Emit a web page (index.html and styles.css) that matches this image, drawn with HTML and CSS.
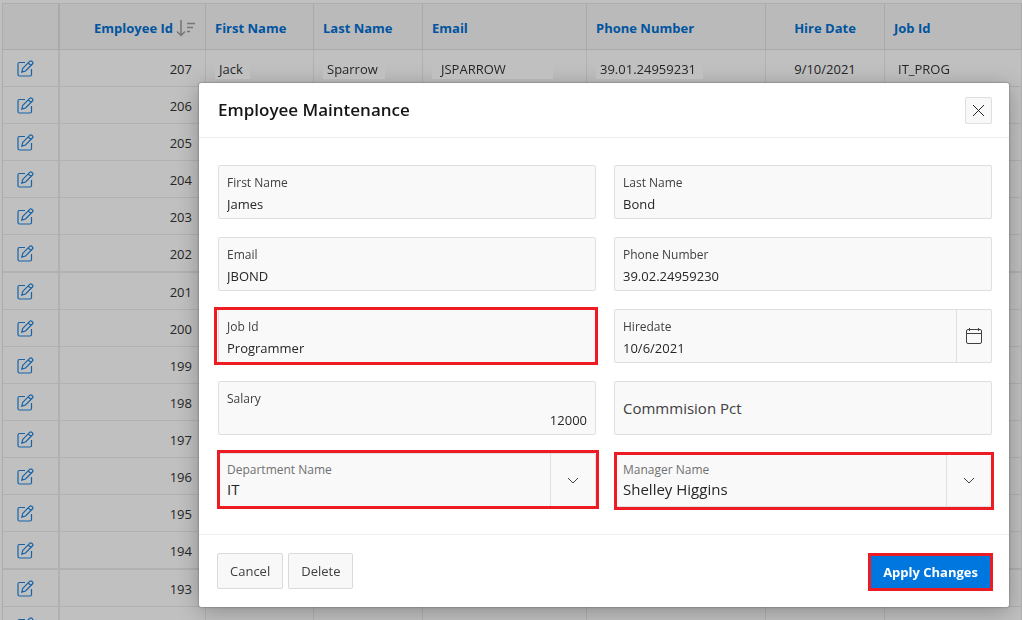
FILE: index.html
```html
<!DOCTYPE html>
<html lang="en">
<head>
<meta charset="utf-8">
<title>Employee Maintenance</title>
<link rel="stylesheet" href="styles.css">
</head>
<body>
<svg class="sprite" aria-hidden="true">
  <symbol id="edit" viewBox="0 0 17 17"><path d="M8 2.500H2.500A1.500 1.500 0 0 0 1 4v10.500A1.500 1.500 0 0 0 2.500 16h10.500a1.500 1.500 0 0 0 1.500-1.500V9M5.800 8.300l6.900-7a1.500 1.500 0 0 1 2.100 0l.600.600a1.500 1.500 0 0 1 0 2.100L8.500 11 4.800 12.100zM11.200 2.800l2.700 2.700"/></symbol>
</svg>
<main class="report">
  <table class="grid">
    <colgroup><col class="c-edit"><col class="c-id"><col class="c-first"><col class="c-last"><col class="c-email"><col class="c-phone"><col class="c-hire"><col></colgroup>
    <thead>
      <tr>
        <th></th>
        <th class="num sorted"><span class="sort-head"><a href="#">Employee Id</a><svg class="sort" viewBox="0 0 20 18"><path d="M5 1v15.500M1 12.500l4 4 4-4M11 4.500h8M11 8.500h6M11 12.500h3"/></svg></span></th>
        <th><a href="#">First Name</a></th>
        <th><a href="#">Last Name</a></th>
        <th><a href="#">Email</a></th>
        <th><a href="#">Phone Number</a></th>
        <th class="mid"><a href="#">Hire Date</a></th>
        <th><a href="#">Job Id</a></th>
      </tr>
    </thead>
    <tbody>
      <tr><td><a class="edit" href="#" aria-label="Edit 207"><svg><use href="#edit"/></svg></a></td><td class="num">207</td><td><span class="value">Jack</span></td><td><span class="value">Sparrow</span></td><td><span class="value wide">JSPARROW</span></td><td><span class="value">39.01.24959231</span></td><td class="mid">9/10/2021</td><td><span class="value plain">IT_PROG</span></td></tr>
      <tr><td><a class="edit" href="#" aria-label="Edit 206"><svg><use href="#edit"/></svg></a></td><td class="num">206</td><td></td><td></td><td></td><td></td><td></td><td></td></tr>
      <tr><td><a class="edit" href="#" aria-label="Edit 205"><svg><use href="#edit"/></svg></a></td><td class="num">205</td><td></td><td></td><td></td><td></td><td></td><td></td></tr>
      <tr><td><a class="edit" href="#" aria-label="Edit 204"><svg><use href="#edit"/></svg></a></td><td class="num">204</td><td></td><td></td><td></td><td></td><td></td><td></td></tr>
      <tr><td><a class="edit" href="#" aria-label="Edit 203"><svg><use href="#edit"/></svg></a></td><td class="num">203</td><td></td><td></td><td></td><td></td><td></td><td></td></tr>
      <tr class="thick"><td><a class="edit" href="#" aria-label="Edit 202"><svg><use href="#edit"/></svg></a></td><td class="num">202</td><td></td><td></td><td></td><td></td><td></td><td></td></tr>
      <tr><td><a class="edit" href="#" aria-label="Edit 201"><svg><use href="#edit"/></svg></a></td><td class="num">201</td><td></td><td></td><td></td><td></td><td></td><td></td></tr>
      <tr><td><a class="edit" href="#" aria-label="Edit 200"><svg><use href="#edit"/></svg></a></td><td class="num">200</td><td></td><td></td><td></td><td></td><td></td><td></td></tr>
      <tr><td><a class="edit" href="#" aria-label="Edit 199"><svg><use href="#edit"/></svg></a></td><td class="num">199</td><td></td><td></td><td></td><td></td><td></td><td></td></tr>
      <tr><td><a class="edit" href="#" aria-label="Edit 198"><svg><use href="#edit"/></svg></a></td><td class="num">198</td><td></td><td></td><td></td><td></td><td></td><td></td></tr>
      <tr><td><a class="edit" href="#" aria-label="Edit 197"><svg><use href="#edit"/></svg></a></td><td class="num">197</td><td></td><td></td><td></td><td></td><td></td><td></td></tr>
      <tr><td><a class="edit" href="#" aria-label="Edit 196"><svg><use href="#edit"/></svg></a></td><td class="num">196</td><td></td><td></td><td></td><td></td><td></td><td></td></tr>
      <tr><td><a class="edit" href="#" aria-label="Edit 195"><svg><use href="#edit"/></svg></a></td><td class="num">195</td><td></td><td></td><td></td><td></td><td></td><td></td></tr>
      <tr class="thick"><td><a class="edit" href="#" aria-label="Edit 194"><svg><use href="#edit"/></svg></a></td><td class="num">194</td><td></td><td></td><td></td><td></td><td></td><td></td></tr>
      <tr><td><a class="edit" href="#" aria-label="Edit 193"><svg><use href="#edit"/></svg></a></td><td class="num">193</td><td></td><td></td><td></td><td></td><td></td><td></td></tr>
      <tr><td><a class="edit" href="#" aria-label="Edit"><svg><use href="#edit"/></svg></a></td><td class="num"></td><td></td><td></td><td></td><td></td><td></td><td></td></tr>
    </tbody>
  </table>
</main>

<form class="dialog" role="dialog" aria-labelledby="dialog-title">
  <header class="dialog-head">
    <h1 id="dialog-title">Employee Maintenance</h1>
    <button type="button" class="close" aria-label="Close"><svg viewBox="0 0 13 13"><path d="M1 1l11 11M12 1L1 12"/></svg></button>
  </header>
  <div class="dialog-body">
    <div class="field"><label for="first">First Name</label><input id="first" type="text" value="James"></div>
    <div class="field"><label for="last">Last Name</label><input id="last" type="text" value="Bond"></div>
    <div class="field"><label for="email">Email</label><input id="email" type="text" value="JBOND"></div>
    <div class="field"><label for="phone">Phone Number</label><input id="phone" type="text" value="39.02.24959230"></div>
    <div class="field marked mark-job"><label for="job">Job Id</label><input id="job" type="text" value="Programmer"></div>
    <div class="field"><label for="hired">Hiredate</label><input id="hired" type="text" value="10/6/2021"><button type="button" class="calendar" aria-label="Choose date"><svg viewBox="0 0 16 16"><path d="M2 1.500h12A1.500 1.500 0 0 1 15.500 3v11a1.500 1.500 0 0 1-1.500 1.500H2A1.500 1.500 0 0 1 .5 14V3A1.500 1.500 0 0 1 2 1.500zM.5 5.500h15M3.500 0v3M12.500 0v3"/></svg></button></div>
    <div class="field"><label for="salary">Salary</label><input id="salary" class="amount" type="text" value="12000"></div>
    <div class="field empty"><label for="commission">Commmision Pct</label><input id="commission" type="text"></div>
    <div class="field choice marked mark-dept"><label for="dept">Department Name</label><select id="dept"><option>IT</option></select><span class="arrow"><svg viewBox="0 0 12 7"><path d="M1 1l5 5 5-5"/></svg></span></div>
    <div class="field choice marked mark-manager"><label for="manager">Manager Name</label><select id="manager"><option>Shelley Higgins</option></select><span class="arrow"><svg viewBox="0 0 12 7"><path d="M1 1l5 5 5-5"/></svg></span></div>
  </div>
  <footer class="dialog-foot">
    <button type="button" class="btn">Cancel</button>
    <button type="button" class="btn">Delete</button>
    <button type="submit" class="btn apply">Apply Changes</button>
  </footer>
</form>
</body>
</html>
```

FILE: styles.css
```css
* { box-sizing: border-box; }

body {
  margin: 0;
  height: 100vh;
  overflow: hidden;
  background: #c0c0c0;
  color: #262626;
  font: 13px/20px "Open Sans", "Noto Sans", sans-serif;
}

input, select, button { font: inherit; color: inherit; }
svg { display: block; fill: none; stroke: currentColor; }
.sprite { display: none; }

/* Report behind the dialog */
.report { padding: 3px 0 0 2px; }

.grid {
  width: 100%;
  table-layout: fixed;
  border-collapse: separate;
  border-spacing: 0;
  border: solid #adadad;
  border-width: 1px 0 0 1px;
}

.c-edit { width: 57px; }
.c-id { width: 146px; }
.c-first { width: 108px; }
.c-last { width: 109px; }
.c-email { width: 164px; }
.c-phone { width: 179px; }
.c-hire { width: 119px; }

.grid th, .grid td {
  padding: 0 9px;
  text-align: left;
  border: solid #b1b1b1;
  border-width: 0 1px 1px 0;
  white-space: nowrap;
}
.grid th { height: 46px; padding-top: 3px; background: #bababa; border-color: #a9a9a9; font-weight: 700; }
.grid td { height: 37px; padding-top: 1px; }
.grid .thick td { height: 38px; border-bottom-width: 2px; }
.grid th:first-child, .grid td:first-child { border-right-width: 2px; }
.grid th a { color: #0054a0; text-decoration: none; }
.grid .num { text-align: right; padding-right: 13px; }
.grid .mid { text-align: center; }
.grid .sorted { padding-right: 9px; }
.sort-head { display: flex; align-items: center; justify-content: flex-end; gap: 3px; }
.sort { width: 20px; height: 18px; color: #767676; stroke-width: 1.5; }

.edit { display: block; width: 17px; margin-left: 5px; color: #1663a6; }
.edit svg { width: 17px; height: 17px; stroke-width: 1.2; }

.value {
  position: relative;
  z-index: 2;
  display: inline-block;
  padding: 0 7px 0 4px;
  background: #c0c0c0;
}
.value.wide { padding: 0 47px 0 9px; }
.value.plain { background: none; }

/* Dialog */
.dialog {
  position: fixed;
  z-index: 1;
  top: 83px;
  left: 199px;
  right: 13px;
  background: #fff;
  border-radius: 2px;
  box-shadow: 0 0 2px #555, 0 4px 22px rgba(0, 0, 0, .28);
}

.dialog-head {
  display: flex;
  align-items: center;
  justify-content: space-between;
  height: 55px;
  padding: 0 17px 0 19px;
  border-bottom: 1px solid #ededed;
}
.dialog-head h1 { margin: 0; color: #161616; font-size: 17px; font-weight: 600; line-height: 24px; }

.close {
  display: grid;
  place-items: center;
  width: 27px;
  height: 27px;
  padding: 0;
  border: 1px solid #dfdfdf;
  border-radius: 2px;
  background: #f8f8f8;
}
.close svg { width: 13px; height: 13px; }

.dialog-body {
  display: grid;
  grid-template-columns: 1fr 1fr;
  gap: 18px;
  padding: 27px 17px 27px 19px;
}

.field {
  position: relative;
  height: 54px;
  padding: 9px 8px 0;
  border: 1px solid #dfdfdf;
  border-radius: 2px;
  background: #f9f9f9;
}
.field label { display: block; color: #404040; font-size: 12px; line-height: 16px; }
.field input, .field select {
  display: block;
  width: 100%;
  height: 20px;
  margin: 3px 0 0;
  padding: 0;
  border: 0;
  outline: 0;
  appearance: none;
  background: none;
}
.field .amount { text-align: right; }

.calendar, .arrow {
  position: absolute;
  top: 0;
  bottom: 0;
  right: 0;
  display: grid;
  place-items: center;
  width: 35px;
  padding: 0;
  border: 0;
  border-left: 1px solid #dfdfdf;
  background: none;
  color: #404040;
}
.calendar svg { width: 16px; height: 16px; }
.arrow { width: 45px; pointer-events: none; }
.arrow svg { width: 12px; height: 7px; }

.empty label { padding-top: 7px; font-size: 15px; line-height: 20px; }
.empty input { position: absolute; inset: 0; height: 100%; margin: 0; padding: 0 8px; }

.choice { padding-top: 8px; }
.choice label { color: #707070; }
.choice select { margin-top: 1px; font-size: 15px; }

/* Red call-out frames */
.marked::after { content: ""; position: absolute; border: 3px solid #ed1c24; pointer-events: none; }
.mark-job::after { inset: -3px -3px -3px -5px; }
.mark-dept::after { inset: -4px -4px -3px -2px; }
.mark-manager::after { inset: -2px -3px -4px -1px; }

.dialog-foot {
  display: flex;
  align-items: flex-start;
  gap: 5px;
  height: 73px;
  padding: 18px 16px 0 18px;
  border-top: 1px solid #f0f0f0;
}
.btn {
  height: 36px;
  padding: 0 12px;
  border: 1px solid #dadada;
  border-radius: 2px;
  background: #f8f8f8;
  color: #404040;
}
.apply {
  height: 38px;
  margin-left: auto;
  border: 3px solid #ed1c24;
  border-radius: 0;
  background: #0076df;
  color: #fff;
  font-weight: 700;
}
```
